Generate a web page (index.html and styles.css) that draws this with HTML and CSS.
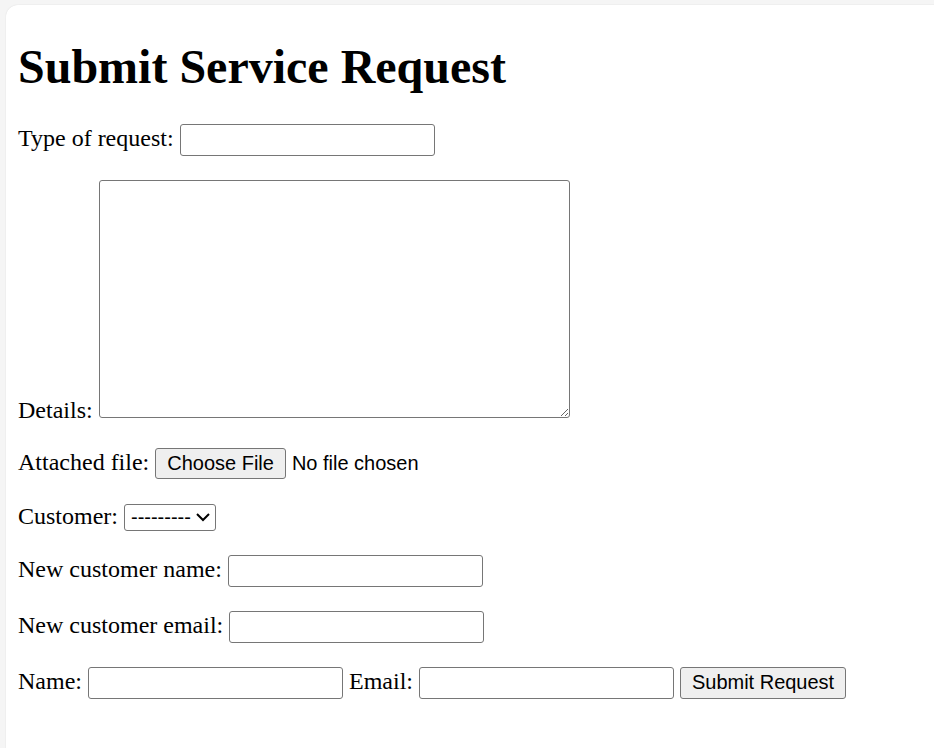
FILE: index.html
```html
<!DOCTYPE html>
<html lang="en">
<head>
<meta charset="utf-8">
<title>Submit Service Request</title>
<link rel="stylesheet" href="styles.css">
</head>
<body>
<div class="page">
  <div class="card">
    <h1>Submit Service Request</h1>
    <form class="request-form">
      <p><label for="id_type">Type of request:</label> <input type="text" id="id_type" class="text-field"></p>
      <p><label for="id_details">Details:</label> <textarea id="id_details" class="details-field"></textarea></p>
      <p><label for="id_file">Attached file:</label> <input type="file" id="id_file" class="file-field"></p>
      <p><label for="id_customer">Customer:</label> <select id="id_customer" class="select-field"><option>---------</option></select></p>
      <p><label for="id_new_name">New customer name:</label> <input type="text" id="id_new_name" class="text-field"></p>
      <p><label for="id_new_email">New customer email:</label> <input type="email" id="id_new_email" class="text-field"></p>
      <p><label for="id_name">Name:</label> <input type="text" id="id_name" class="text-field"> <label for="id_email">Email:</label> <input type="email" id="id_email" class="text-field"> <button type="submit" class="submit-btn">Submit Request</button></p>
    </form>
  </div>
</div>
</body>
</html>
```

FILE: styles.css
```css
html {
  background: #f5f5f5;
  overflow: hidden;
}

body {
  margin: 0;
  font-family: "Liberation Serif", "Times New Roman", serif;
  font-size: 16px;
  color: #000;
  zoom: 1.5;
}

.page {
  padding: 3.33px 0 0 4px;
}

.card {
  display: flow-root;
  background: #fff;
  border-radius: 8px;
  box-shadow: 0 0 1px rgba(0, 0, 0, 0.12);
  padding: 0 8px 1px;
  width: 700px;
  min-height: 600px;
}

h1 {
  font-size: 2em;
  font-weight: bold;
  margin: 0.67em 0;
  position: relative;
  top: 1px;
}

.request-form p {
  margin: 1em 0;
}

input,
select,
textarea,
button {
  font-family: "Liberation Sans", Arial, sans-serif;
  font-size: 13.33px;
}

.text-field {
  box-sizing: border-box;
  width: 170px;
  height: 21.33px;
  border: 1px solid #767676;
  border-radius: 2px;
  padding: 1px 2px;
}

.details-field {
  box-sizing: border-box;
  width: 314px;
  height: 158.67px;
  border: 1px solid #767676;
  border-radius: 2px;
  vertical-align: baseline;
}

.select-field {
  box-sizing: border-box;
  width: 61.33px;
  height: 18px;
  border: 1px solid #767676;
  border-radius: 2px;
  background: #fff;
  color: #000;
}

.file-field::file-selector-button {
  font-family: "Liberation Sans", Arial, sans-serif;
  font-size: 13.33px;
  height: 20.67px;
  border: 1px solid #767676;
  border-radius: 2px;
  background: #efefef;
  padding: 1px 7.33px;
  margin-right: 4px;
}

.submit-btn {
  box-sizing: border-box;
  height: 21.33px;
  border: 1px solid #767676;
  border-radius: 2px;
  background: #efefef;
  padding: 1px 7.33px;
  color: #000;
}
```
